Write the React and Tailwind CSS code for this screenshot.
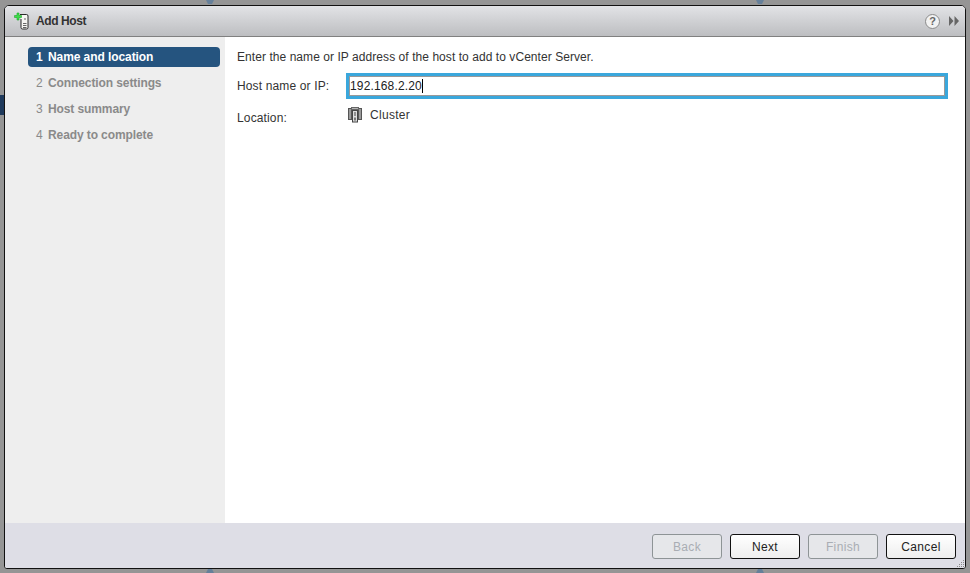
const steps = [
  { n: 1, label: "Name and location", active: true },
  { n: 2, label: "Connection settings" },
  { n: 3, label: "Host summary" },
  { n: 4, label: "Ready to complete" },
];

function AddHostIcon() {
  return (
    <svg width="16" height="20" viewBox="0 0 16 20" className="shrink-0">
      <path d="M6 3.500h6.500a1.500 1.500 0 0 1 1.500 1.500v11.500a1.500 1.500 0 0 1-1.500 1.500h-4A1.500 1.500 0 0 1 7 16.500V8" fill="#f6f6f2" stroke="#2a2a2a" strokeWidth="1" />
      <path d="M9 12.500h3.500M9 14.500h3.500M9 16.500h3.500M10 8h2" stroke="#666" strokeWidth="1" />
      <path d="M3 2h2v2.500h2.500v2H5V9H3V6.500H.5v-2H3z" fill="#3ee04a" stroke="#1fa52b" strokeWidth="0.6" />
    </svg>
  );
}

function ClusterIcon() {
  return (
    <svg width="14" height="16" viewBox="0 0 14 16" className="shrink-0">
      <rect x="0.500" y="1.500" width="3" height="11" fill="#9a9a9a" stroke="#555555" />
      <rect x="10.500" y="1.500" width="3" height="11" fill="#9a9a9a" stroke="#555555" />
      <rect x="3.500" y="0.500" width="7" height="2" fill="#b5b5b5" stroke="#666666" />
      <rect x="4.500" y="3.500" width="5" height="11.500" fill="#dcdcdc" stroke="#444444" />
      <path d="M6 6h2M6 8h2" stroke="#444444" />
      <rect x="6" y="10.500" width="2" height="3" fill="#777777" />
    </svg>
  );
}

function Notch({ className }) {
  return (
    <svg width="8" height="4" viewBox="0 0 8 4" className={className}>
      <path d="M0 0h8L6 4H2z" fill="#66809a" />
    </svg>
  );
}

function FooterButton({ label, disabled }) {
  return (
    <button
      className={
        disabled
          ? "w-[70px] h-[25px] rounded-[3px] border border-[#8e9496] bg-[#e6e7ea] text-[12px] tracking-[0.35px] text-[#a9adb3]"
          : "w-[70px] h-[25px] rounded-[3px] border border-[#111111] bg-gradient-to-b from-white to-[#eeeeee] text-[12px] tracking-[0.35px] text-[#222222]"
      }
    >
      {label}
    </button>
  );
}

export default function App() {
  return (
    <div className="relative w-[970px] h-[573px] bg-[#959595] pt-[5px] pl-[4px] pr-[4px] pb-[4px] overflow-hidden font-['Liberation_Sans',Arial,sans-serif]">
      {/* bits of the page behind the dialog */}
      <div className="absolute left-0 top-[95px] w-[4px] h-[20px] bg-[#1f3a5c]" />
      <Notch className="absolute left-[206px] top-0" />
      <Notch className="absolute left-[756px] top-0" />
      <Notch className="absolute left-[206px] bottom-0 rotate-180" />
      <Notch className="absolute left-[756px] bottom-0 rotate-180" />

      <div className="relative flex flex-col h-full border border-[#111111] rounded-tl-[5px] rounded-tr-[5px] rounded-bl-[3px] rounded-br-[3px] overflow-hidden bg-white">
        {/* title bar */}
        <div className="flex items-center h-[31px] shrink-0 pl-[9px] pr-[6px] bg-gradient-to-b from-[#e2e3e6] to-[#bdbec1] border-b border-[#808080]">
          <AddHostIcon />
          <span className="ml-[6px] text-[12px] font-bold tracking-[-0.4px] text-[#333333]">Add Host</span>
          <div className="ml-auto flex items-center gap-[9px]">
            <span className="flex items-center justify-center w-[15px] h-[15px] rounded-full border border-[#8a8a8a] bg-[#f2f2f2] text-[11px] font-bold leading-none text-[#666666]">
              ?
            </span>
            <svg width="10" height="10" viewBox="0 0 10 10">
              <path d="M0 0l4.500 5L0 10zM5.500 0l4.500 5-4.500 5z" fill="#666666" />
            </svg>
          </div>
        </div>

        {/* body */}
        <div className="flex flex-1 min-h-0">
          <div className="w-[220px] shrink-0 bg-[#eeeeee] pt-[10px] pl-[23px] pr-[5px]">
            {steps.map((s) => (
              <div
                key={s.n}
                className={
                  s.active
                    ? "flex items-center h-[20px] mb-[6px] rounded-[4px] bg-[#25547f] text-white text-[12px] font-bold tracking-[-0.08px] pl-[8px]"
                    : "flex items-center h-[20px] mb-[6px] text-[#8a8a8a] text-[12px] font-bold tracking-[-0.1px] pl-[8px]"
                }
              >
                <span className={s.active ? "w-[12px]" : "w-[12px] font-normal"}>{s.n}</span>
                <span>{s.label}</span>
              </div>
            ))}
          </div>

          <div className="flex-1 pl-[12px] pr-[17px] pt-[12px] text-[12px] tracking-[0.06px] text-[#333333]">
            <p className="leading-[16px]">Enter the name or IP address of the host to add to vCenter Server.</p>
            <div className="flex items-center mt-[8px]">
              <span className="w-[109px] shrink-0 tracking-[0.14px]">Host name or IP:</span>
              <div className="flex items-center flex-1 h-[26px] border-[3px] border-[#3aa7dc] outline outline-1 -outline-offset-4 outline-[#999999] pl-[1px] bg-white">
                <span className="text-[12px] tracking-[0.15px] text-[#222222]">192.168.2.20</span>
                <span className="w-px h-[14px] bg-black" />
              </div>
            </div>
            <div className="flex items-start mt-[7px]">
              <span className="w-[111px] shrink-0 mt-[3px] tracking-[0.14px]">Location:</span>
              <div className="flex items-center">
                <ClusterIcon />
                <span className="ml-[8px] tracking-[0.3px]">Cluster</span>
              </div>
            </div>
          </div>
        </div>

        {/* footer */}
        <div className="flex items-center justify-end gap-[8px] h-[45px] shrink-0 pr-[9px] pt-[2px] bg-[#dedee6]">
          <FooterButton label="Back" disabled />
          <FooterButton label="Next" />
          <FooterButton label="Finish" disabled />
          <FooterButton label="Cancel" />
        </div>

        {/* resize grip */}
        <svg width="9" height="9" viewBox="0 0 9 9" className="absolute right-0 bottom-0">
          <path d="M7 1h1M5 3h1M7 3h1M3 5h1M5 5h1M7 5h1M1 7h1M3 7h1M5 7h1M7 7h1" stroke="#8a8a8a" strokeWidth="1" transform="translate(0 0.500)" />
        </svg>
      </div>
    </div>
  );
}
